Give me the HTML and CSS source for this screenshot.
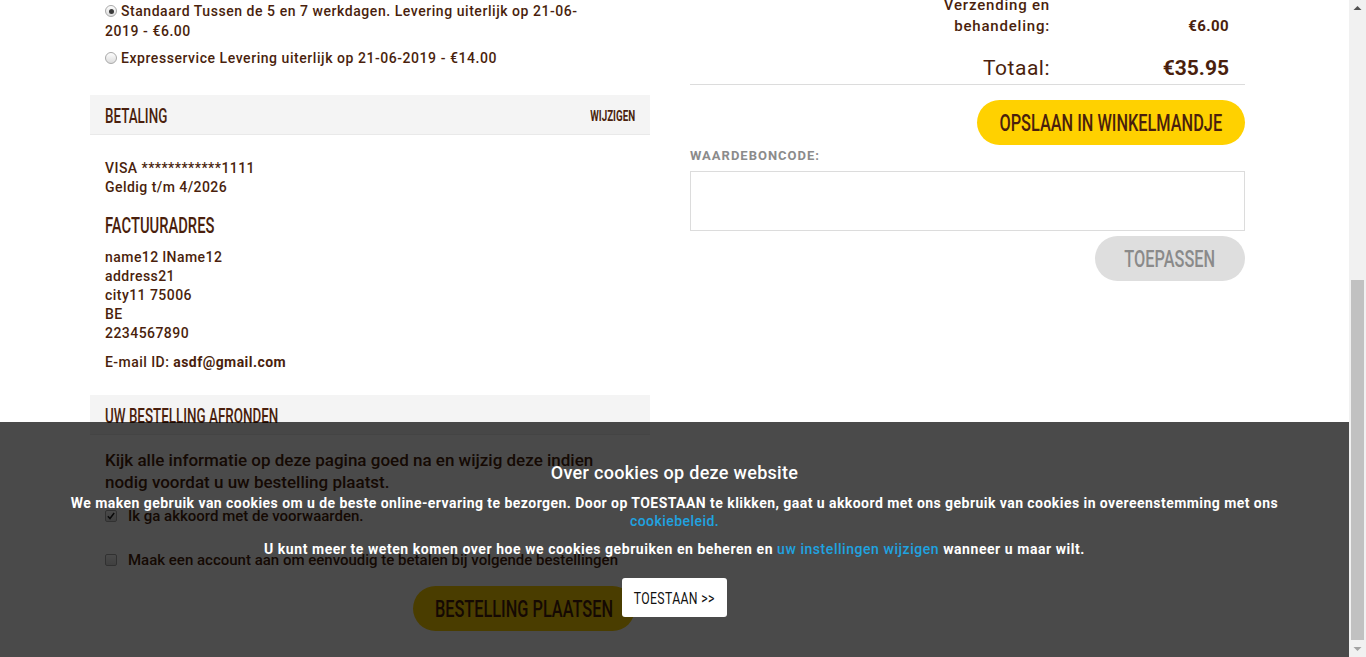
FILE: index.html
```html
<!DOCTYPE html>
<html lang="nl">
<head>
<meta charset="utf-8">
<title>Afrekenen</title>
<link rel="stylesheet" href="styles.css">
</head>
<body>
<div class="viewport">
  <main class="page">
    <div class="layout">
      <section class="col-left">
        <div class="shipping">
          <p class="ship-opt"><span class="radio checked"></span>Standaard Tussen de 5 en 7 werkdagen. Levering uiterlijk op 21-06-2019 - €6.00</p>
          <p class="ship-opt"><span class="radio"></span>Expresservice Levering uiterlijk op 21-06-2019 - €14.00</p>
        </div>

        <div class="section-bar">
          <h2 class="bar-title"><span class="cond">BETALING</span></h2>
          <a class="bar-link"><span class="cond">WIJZIGEN</span></a>
        </div>
        <div class="section-body">
          <p class="lines">VISA ************1111<br>Geldig t/m 4/2026</p>
          <h3 class="sub-title"><span class="cond">FACTUURADRES</span></h3>
          <p class="lines">name12 lName12<br>address21<br>city11 75006<br>BE<br>2234567890</p>
          <p class="lines email">E-mail ID: <strong>asdf@gmail.com</strong></p>
        </div>

        <div class="section-bar bar-second">
          <h2 class="bar-title"><span class="cond">UW BESTELLING AFRONDEN</span></h2>
        </div>
        <div class="section-body finish">
          <p class="notice">Kijk alle informatie op deze pagina goed na en wijzig deze indien nodig voordat u uw bestelling plaatst.</p>
          <p class="check-row"><span class="checkbox checked"><svg viewBox="0 0 12 12" width="10" height="10"><path d="M2.2 6.3 L4.8 9 L9.8 2.4" fill="none" stroke="#222" stroke-width="1.8"/></svg></span>Ik ga akkoord met de voorwaarden.</p>
          <p class="check-row second"><span class="checkbox"></span>Maak een account aan om eenvoudig te betalen bij volgende bestellingen</p>
          <div class="btn-row">
            <button class="btn-yellow btn-order"><span class="cond">BESTELLING PLAATSEN</span></button>
          </div>
        </div>
      </section>

      <section class="col-right">
        <div class="sum-row">
          <span class="sum-label">Verzending en behandeling:</span>
          <span class="sum-value">€6.00</span>
        </div>
        <div class="sum-row total">
          <span class="sum-label">Totaal:</span>
          <span class="sum-value">€35.95</span>
        </div>
        <div class="btn-row right">
          <button class="btn-yellow btn-save"><span class="cond">OPSLAAN IN WINKELMANDJE</span></button>
        </div>
        <label class="voucher-label">WAARDEBONCODE:</label>
        <div class="voucher-input"></div>
        <div class="btn-row right">
          <button class="btn-grey"><span class="cond">TOEPASSEN</span></button>
        </div>
      </section>
    </div>

    <div class="cookie-overlay">
      <h4 class="cookie-title">Over cookies op deze website</h4>
      <p class="cookie-text">We maken gebruik van cookies om u de beste online-ervaring te bezorgen. Door op TOESTAAN te klikken, gaat u akkoord met ons gebruik van cookies in overeenstemming met ons<br><a class="cookie-link">cookiebeleid.</a></p>
      <p class="cookie-text">U kunt meer te weten komen over hoe we cookies gebruiken en beheren en <a class="cookie-link">uw instellingen wijzigen</a> wanneer u maar wilt.</p>
      <button class="cookie-btn"><span class="cond">TOESTAAN &gt;&gt;</span></button>
    </div>
  </main>

  <div class="scrollbar">
    <div class="sb-arrow up"><svg viewBox="0 0 17 17" width="17" height="17"><path d="M4.5 10 L8.5 6 L12.5 10 Z" fill="#505050"/></svg></div>
    <div class="sb-track"><div class="sb-thumb"></div></div>
    <div class="sb-arrow down"><svg viewBox="0 0 17 17" width="17" height="17"><path d="M4.5 7 L8.5 11 L12.5 7 Z" fill="#a3a3a3"/></svg></div>
  </div>
</div>
</body>
</html>
```

FILE: styles.css
```css
* { box-sizing: border-box; }

html, body {
  margin: 0;
  padding: 0;
  height: 100%;
  overflow: hidden;
  background: #fff;
}

body {
  font-family: Roboto, "DejaVu Sans", sans-serif;
  color: #4a1f0d;
}

p, h2, h3, h4 { margin: 0; }

/* condensed display type (DIN Condensed look-alike) */
.cond {
  display: inline-block;
  white-space: nowrap;
  font-weight: 500;
  transform: scaleX(0.67);
  transform-origin: left center;
}

.viewport {
  display: flex;
  height: 657px;
}

.page {
  flex: 1;
  position: relative;
  overflow: hidden;
}

.layout {
  display: grid;
  grid-template-columns: 560px 555px;
  column-gap: 40px;
  padding-left: 90px;
}

/* ---------- left column ---------- */
.shipping {
  margin-top: 1px;
  padding: 0 55px 0 15px;
}

.ship-opt {
  font-size: 14px;
  font-weight: 500;
  line-height: 20px;
  letter-spacing: 0.55px;
}
.ship-opt + .ship-opt { margin-top: 7px; }

.radio {
  display: inline-block;
  width: 12px;
  height: 12px;
  border-radius: 50%;
  border: 1px solid #a9a9a9;
  background: linear-gradient(#fdfdfd, #dcdcdc);
  margin-right: 4px;
  vertical-align: -1px;
  position: relative;
}
.radio.checked::after {
  content: "";
  position: absolute;
  left: 2.5px;
  top: 2.5px;
  width: 5px;
  height: 5px;
  border-radius: 50%;
  background: #3a3a3a;
}

.section-bar {
  margin-top: 27px;
  height: 40px;
  background: #f4f4f4;
  border-bottom: 1px solid #e9e9e9;
  display: flex;
  align-items: center;
  justify-content: space-between;
  padding: 2px 15px 0;
}
.bar-second { margin-top: 23px; }

.bar-title {
  font-size: 20px;
  font-weight: 500;
  line-height: 24px;
  color: #4a1f0d;
}

.bar-link {
  font-size: 14px;
  line-height: 16px;
}
.bar-link .cond {
  font-weight: 700;
  transform: scaleX(0.7);
  transform-origin: right center;
}

.section-body {
  padding: 24px 15px 0;
}

.lines {
  font-size: 14px;
  font-weight: 500;
  line-height: 19px;
  letter-spacing: 0.45px;
}

.sub-title {
  font-size: 22px;
  font-weight: 500;
  line-height: 24px;
  margin: 17px 0 10px;
}

.email { margin-top: 10px; }
.email strong { font-weight: 700; }

.finish { padding-top: 14px; }

.notice {
  font-size: 17px;
  font-weight: 500;
  line-height: 22px;
  letter-spacing: 0;
}

.check-row {
  margin-top: 13px;
  font-size: 15px;
  font-weight: 500;
  line-height: 20px;
  letter-spacing: 0;
  display: flex;
  align-items: center;
}
.check-row.second { margin-top: 24px; }

.checkbox {
  width: 12px;
  height: 12px;
  border: 1px solid #a9a9a9;
  border-radius: 2px;
  background: linear-gradient(#fdfdfd, #dcdcdc);
  margin-right: 11px;
  display: flex;
  align-items: center;
  justify-content: center;
  flex: none;
}

.btn-row {
  display: flex;
  justify-content: flex-end;
  margin-top: 16px;
}

.btn-yellow, .btn-grey {
  border: none;
  border-radius: 23px;
  font-family: Roboto, sans-serif;
  font-size: 24px;
  height: 45px;
  padding: 0;
  color: #4a1f0d;
  background: #ffd100;
  display: flex;
  align-items: center;
  justify-content: center;
  overflow: visible;
}
.btn-yellow .cond, .btn-grey .cond {
  transform-origin: center center;
  transform: scaleX(0.68);
}

.btn-order { width: 222px; }

/* ---------- right column ---------- */
.col-right { margin-top: -5px; }

.sum-row {
  display: flex;
  justify-content: flex-end;
  align-items: flex-end;
  font-size: 15px;
  font-weight: 500;
  line-height: 21px;
  letter-spacing: 0.8px;
}

.sum-label {
  width: 120px;
  text-align: right;
}

.sum-value {
  width: 195px;
  padding-right: 16px;
  text-align: right;
  font-weight: 700;
  letter-spacing: 0.4px;
}

.sum-row.total {
  margin-top: 18px;
  font-size: 21px;
  line-height: 26px;
  font-weight: 400;
  letter-spacing: 0.5px;
  padding-bottom: 3px;
  border-bottom: 1px solid #dcdcdc;
}
.sum-row.total .sum-label { width: 200px; }
.sum-row.total .sum-value { letter-spacing: 0; }

.btn-row.right { margin-top: 15px; }

.btn-save { width: 268px; }

.voucher-label {
  display: block;
  margin-top: 3px;
  font-size: 13px;
  font-weight: 700;
  line-height: 16px;
  letter-spacing: 1px;
  color: #8b8b8b;
}

.voucher-input {
  margin-top: 7px;
  height: 60px;
  border: 1px solid #dcdcdc;
}

.col-right .voucher-input + .btn-row { margin-top: 5px; }

.btn-grey {
  width: 150px;
  background: #dedede;
  color: #8a8a8a;
}

/* ---------- cookie overlay ---------- */
.cookie-overlay {
  position: absolute;
  left: 0;
  right: 0;
  bottom: 0;
  height: 235px;
  background: rgba(0, 0, 0, 0.71);
  text-align: center;
  padding-top: 39px;
  color: #fff;
}

.cookie-title {
  font-size: 18px;
  font-weight: 500;
  line-height: 24px;
  letter-spacing: 0.3px;
}

.cookie-text {
  margin-top: 9px;
  font-size: 14px;
  font-weight: 700;
  line-height: 18px;
  letter-spacing: 0.45px;
}
.cookie-text + .cookie-text { margin-top: 10px; letter-spacing: 0.55px; }

.cookie-link {
  color: #1fa3e0;
  font-weight: 500;
}

.cookie-btn {
  margin: 20px auto 0;
  width: 105px;
  height: 39px;
  border: none;
  border-radius: 3px;
  background: #fff;
  color: #111;
  font-family: Roboto, sans-serif;
  font-size: 17px;
  padding: 0;
  display: flex;
  align-items: center;
  justify-content: center;
}
.cookie-btn .cond {
  font-weight: 400;
  letter-spacing: 0.5px;
  transform-origin: center center;
  transform: scaleX(0.72);
}

/* ---------- fake scrollbar ---------- */
.scrollbar {
  width: 17px;
  flex: none;
  background: #f1f1f1;
  display: flex;
  flex-direction: column;
}

.sb-arrow { height: 17px; flex: none; }

.sb-track {
  flex: 1;
  padding: 263px 2px 0;
}

.sb-thumb {
  height: 360px;
  background: #c1c1c1;
}
```
